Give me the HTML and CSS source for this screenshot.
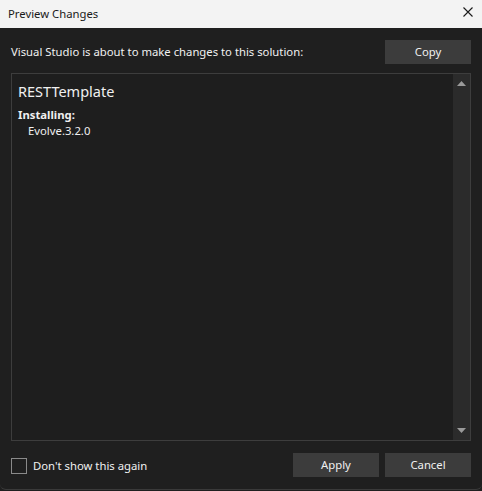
FILE: index.html
```html
<!DOCTYPE html>
<html>
<head>
<meta charset="utf-8">
<link rel="stylesheet" href="styles.css">
</head>
<body>
<div class="window">
  <div class="titlebar">
    <span class="title">Preview Changes</span>
    <svg class="close" width="10" height="10" viewBox="0 0 10 10"><path d="M0.5 0.5L9.5 9.5M9.5 0.5L0.5 9.5" stroke="#1a1a1a" stroke-width="1.1" fill="none"/></svg>
  </div>
  <div class="body">
    <div class="toprow">
      <span class="msg">Visual Studio is about to make changes to this solution:</span>
      <button class="btn">Copy</button>
    </div>
    <div class="panel">
      <div class="panel-content">
        <div class="proj">RESTTemplate</div>
        <div class="section">Installing:</div>
        <div class="item">Evolve.3.2.0</div>
      </div>
      <div class="scrollbar">
        <svg class="arrow" width="9" height="5" viewBox="0 0 9 5"><path d="M4.5 0L9 5H0Z" fill="#9a9a9a"/></svg>
        <svg class="arrow" width="9" height="5" viewBox="0 0 9 5"><path d="M0 0H9L4.5 5Z" fill="#9a9a9a"/></svg>
      </div>
    </div>
    <div class="bottomrow">
      <label class="check"><span class="box"></span><span>Don't show this again</span></label>
      <div class="buttons">
        <button class="btn">Apply</button>
        <button class="btn">Cancel</button>
      </div>
    </div>
  </div>
</div>
</body>
</html>
```
FILE: styles.css
```css
html, body {
  margin: 0;
  padding: 0;
  background: #1f1f1f;
}
body {
  width: 482px;
  height: 491px;
  overflow: hidden;
  font-family: "Noto Sans", "Open Sans", sans-serif;
  font-size: 11.3px;
  color: #f0f0f0;
}
.window {
  height: 490px;
  display: flex;
  flex-direction: column;
  border-bottom: 1px solid #3a3a3a;
  border-radius: 0 0 6px 6px;
  box-sizing: border-box;
}
.titlebar {
  height: 28px;
  background: #f3f3f3;
  color: #1a1a1a;
  display: flex;
  align-items: center;
  justify-content: space-between;
  padding: 0 9px 0 8px;
  flex: none;
}
.title {
  font-size: 11.3px;
  line-height: 16px;
  margin-top: -1px;
}
.close {
  display: block;
  margin-top: -4px;
}
.body {
  flex: 1;
  padding: 12px 11px 0 11px;
  display: flex;
  flex-direction: column;
}
.toprow {
  display: flex;
  align-items: center;
  justify-content: space-between;
  height: 24px;
}
.msg {
  line-height: 16px;
}
.btn {
  width: 86px;
  height: 24px;
  background: #3c3c3c;
  border: none;
  color: #f0f0f0;
  font-family: inherit;
  font-size: 11.3px;
  padding: 0;
  line-height: 16px;
}
.panel {
  margin-top: 9px;
  height: 368px;
  border: 1px solid #3d3d3d;
  box-sizing: border-box;
  background: #1e1e1e;
  display: flex;
}
.panel-content {
  flex: 1;
  padding: 6px 0 0 6px;
}
.proj {
  font-size: 14.5px;
  line-height: 22px;
}
.section {
  font-weight: bold;
  line-height: 16px;
  margin-top: 5px;
}
.item {
  padding-left: 10px;
  line-height: 16px;
}
.scrollbar {
  width: 17px;
  background: #2b2b2b;
  display: flex;
  flex-direction: column;
  justify-content: space-between;
  align-items: center;
  padding: 7px 0 7px 0;
}
.arrow {
  display: block;
}
.bottomrow {
  margin-top: 12px;
  display: flex;
  justify-content: space-between;
  align-items: center;
  height: 24px;
}
.check {
  display: flex;
  align-items: center;
  gap: 6px;
}
.box {
  width: 14px;
  height: 14px;
  border: 1px solid #8a8a8a;
  display: block;
  margin-top: 2px;
}
.buttons {
  display: flex;
  gap: 6px;
}
```
